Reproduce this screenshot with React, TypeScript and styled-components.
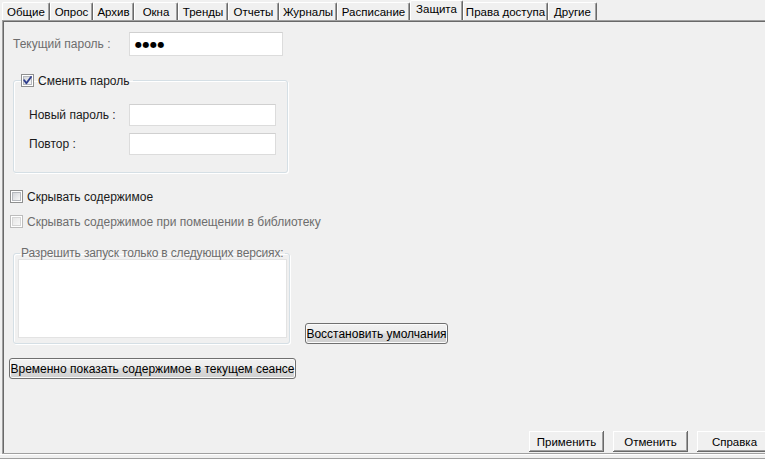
import React from 'react';
import styled, { createGlobalStyle } from 'styled-components';

const GlobalStyle = createGlobalStyle`
  html, body { margin: 0; padding: 0; background: #f0f0f0; overflow: hidden; }
  body { width: 765px; height: 459px; }
  #root { width: 765px; height: 459px; overflow: hidden; }
`;

const Window = styled.div`
  width: 780px;
  height: 459px;
  display: flex;
  flex-direction: column;
  background: #f0f0f0;
  font-family: "Liberation Sans", Arial, sans-serif;
`;

const TabStrip = styled.div`
  display: flex;
  align-items: flex-end;
  height: 20px;
  padding-left: 2px;
  flex: none;
`;

const Tab = styled.div<{ $w: number; $active?: boolean }>`
  box-sizing: border-box;
  width: ${p => p.$w}px;
  height: ${p => (p.$active ? 20 : 18)}px;
  display: flex;
  align-items: center;
  justify-content: center;
  padding-bottom: ${p => (p.$active ? 3 : 0)}px;
  font-size: 11.5px;
  color: #000;
  border-left: 1px solid #fff;
  border-top: 1px solid #fff;
  border-right: 1px solid #696969;
  box-shadow: inset -1px 0 0 #a0a0a0;
  border-top-left-radius: 2px;
  border-top-right-radius: 2px;
`;

const Panel = styled.div`
  flex: 1;
  margin-left: 2px;
  border-top: 1px solid #a0a0a0;
  border-left: 1px solid #a0a0a0;
  border-bottom: 1px solid #a0a0a0;
  box-shadow: inset 1px 1px 0 #696969;
  display: flex;
  flex-direction: column;
  align-items: flex-start;
  padding: 11px 0 1px 6px;
  min-height: 0;
`;

const FooterLine = styled.div`
  height: 5px;
  box-sizing: border-box;
  flex: none;
  border-top: 1px solid #fff;
  border-bottom: 1px solid #a0a0a0;
`;

const Label = styled.span<{ $w?: number; $disabled?: boolean }>`
  width: ${p => (p.$w ? `${p.$w}px` : 'auto')};
  flex: none;
  font-size: 12px;
  color: ${p => (p.$disabled ? '#6d6d6d' : '#1a1a1a')};
  white-space: nowrap;
`;

const PasswordRow = styled.div`
  display: flex;
  align-items: center;
  margin-left: 4px;
  height: 24px;
`;

const TextBox = styled.div<{ $w: number; $h: number }>`
  box-sizing: border-box;
  width: ${p => p.$w}px;
  height: ${p => p.$h}px;
  background: #fff;
  border: 1px solid #dcdcdc;
  border-top-color: #d0d0d0;
  display: flex;
  align-items: center;
  padding-left: 5px;
`;

const Dots = styled.span`
  font-family: "DejaVu Sans", sans-serif;
  font-size: 8px;
  letter-spacing: 0.5px;
  color: #000;
`;

const GroupBox = styled.fieldset<{ $w: number }>`
  box-sizing: border-box;
  width: ${p => p.$w}px;
  margin: 0;
  border: 1px solid #d5dfe5;
  border-radius: 3px;
  box-shadow: inset 1px 1px 0 #fff, 1px 1px 0 #fff;
  min-width: 0;
`;

const PasswordGroup = styled(GroupBox)`
  margin: 18px 0 0 4px;
  padding: 17px 0 17px 0;
`;

const GroupFields = styled.div`
  display: flex;
  flex-direction: column;
  gap: 7px;
  padding-left: 15px;
`;

const Legend = styled.legend`
  margin-left: 7px;
  padding: 0 3px 0 0;
  height: 13px;
  display: flex;
  align-items: center;
  gap: 4px;
`;

const GrayLegend = styled.legend`
  margin-left: 2px;
  padding: 0 1px;
  font-size: 12px;
  line-height: 12px;
  height: 12px;
  letter-spacing: -0.15px;
  color: #6d6d6d;
  white-space: nowrap;
`;

const FieldRow = styled.div`
  display: flex;
  align-items: center;
  height: 22px;
`;

const CheckRow = styled.div<{ $top: number }>`
  display: flex;
  align-items: center;
  gap: 4px;
  height: 13px;
  margin: ${p => p.$top}px 0 0 1px;
`;

const Box = styled.span<{ $disabled?: boolean }>`
  position: relative;
  box-sizing: border-box;
  width: 13px;
  height: 13px;
  flex: none;
  border: 1px solid ${p => (p.$disabled ? '#bcbcbc' : '#8e8f8f')};
  background: #fff;
  padding: 1px;
  display: flex;
`;

const BoxInner = styled.span<{ $disabled?: boolean }>`
  flex: 1;
  border: 1px solid ${p => (p.$disabled ? '#d6d6d6' : '#b5b8bd')};
  background: ${p =>
    p.$disabled
      ? 'linear-gradient(135deg, #e6e6e6, #f8f8f8)'
      : 'linear-gradient(135deg, #d3d6da, #f7f7f7)'};
`;

const CheckMark = styled.svg`
  position: absolute;
  left: -1px;
  top: -1px;
  width: 13px;
  height: 13px;
`;

const VersionsRow = styled.div`
  display: flex;
  align-items: flex-end;
  gap: 15px;
  margin: 19px 0 0 4px;
`;

const VersionsGroup = styled(GroupBox)`
  padding: 0 1px 5px 4px;
`;

const ListBox = styled.div`
  box-sizing: border-box;
  width: 269px;
  height: 79px;
  background: #fff;
  border: 1px solid #e3e3e3;
`;

const AeroButton = styled.button<{ $w: number; $top?: number }>`
  box-sizing: border-box;
  width: ${p => p.$w}px;
  height: 21px;
  flex: none;
  margin: ${p => p.$top ?? 0}px 0 0 0;
  padding: 0;
  border: 1px solid #707070;
  border-radius: 3px;
  background: linear-gradient(#f2f2f2 0%, #ebebeb 50%, #dddddd 50%, #cfcfcf 100%);
  box-shadow: inset 0 0 0 1px #fbfbfb;
  font-family: "Liberation Sans", Arial, sans-serif;
  font-size: 12px;
  color: #000;
`;

const Spacer = styled.div`
  flex: 1;
`;

const DialogButtons = styled.div`
  align-self: stretch;
  display: flex;
  justify-content: flex-end;
  gap: 9px;
  padding-right: 8px;
`;

const ClassicButton = styled.button`
  box-sizing: border-box;
  width: 75px;
  height: 21px;
  padding: 0;
  border: none;
  background: #f0f0f0;
  box-shadow: inset -1px -1px 0 #696969, inset 1px 1px 0 #fff, inset -2px -2px 0 #a0a0a0;
  font-family: "Liberation Sans", Arial, sans-serif;
  font-size: 11.5px;
  color: #000;
`;

const tabs: { name: string; w: number; active?: boolean }[] = [
  { name: 'Общие', w: 48 },
  { name: 'Опрос', w: 43 },
  { name: 'Архив', w: 41 },
  { name: 'Окна', w: 44 },
  { name: 'Тренды', w: 50 },
  { name: 'Отчеты', w: 51 },
  { name: 'Журналы', w: 58 },
  { name: 'Расписание', w: 73 },
  { name: 'Защита', w: 53, active: true },
  { name: 'Права доступа', w: 85 },
  { name: 'Другие', w: 49 },
];

function Check({ checked, disabled }: { checked?: boolean; disabled?: boolean }) {
  return (
    <Box $disabled={disabled}>
      <BoxInner $disabled={disabled} />
      {checked && (
        <CheckMark viewBox="0 0 13 13">
          <path d="M3.2 6.2 L5.4 9.2 L10 3" fill="none" stroke="#303f8e" strokeWidth="1.9" strokeLinecap="round" strokeLinejoin="round" />
        </CheckMark>
      )}
    </Box>
  );
}

export default function App() {
  return (
    <>
      <GlobalStyle />
      <Window>
        <TabStrip>
          {tabs.map(t => (
            <Tab key={t.name} $w={t.w} $active={t.active}>
              {t.name}
            </Tab>
          ))}
        </TabStrip>
        <Panel>
          <PasswordRow>
            <Label $w={116} $disabled>Текущий пароль :</Label>
            <TextBox $w={154} $h={24}>
              <Dots>●●●●</Dots>
            </TextBox>
          </PasswordRow>

          <PasswordGroup $w={275}>
            <Legend>
              <Check checked />
              <Label>Сменить пароль</Label>
            </Legend>
            <GroupFields>
              <FieldRow>
                <Label $w={100}>Новый пароль :</Label>
                <TextBox $w={147} $h={22} />
              </FieldRow>
              <FieldRow>
                <Label $w={100}>Повтор :</Label>
                <TextBox $w={147} $h={22} />
              </FieldRow>
            </GroupFields>
          </PasswordGroup>

          <CheckRow $top={17}>
            <Check />
            <Label>Скрывать содержимое</Label>
          </CheckRow>
          <CheckRow $top={12}>
            <Check disabled />
            <Label $disabled>Скрывать содержимое при помещении в библиотеку</Label>
          </CheckRow>

          <VersionsRow>
            <VersionsGroup $w={277}>
              <GrayLegend>Разрешить запуск только в следующих версиях:</GrayLegend>
              <ListBox />
            </VersionsGroup>
            <AeroButton $w={143}>Восстановить умолчания</AeroButton>
          </VersionsRow>

          <AeroButton $w={287} $top={14}>Временно показать содержимое в текущем сеансе</AeroButton>

          <Spacer />
          <DialogButtons>
            <ClassicButton>Применить</ClassicButton>
            <ClassicButton>Отменить</ClassicButton>
            <ClassicButton>Справка</ClassicButton>
          </DialogButtons>
        </Panel>
        <FooterLine />
      </Window>
    </>
  );
}
